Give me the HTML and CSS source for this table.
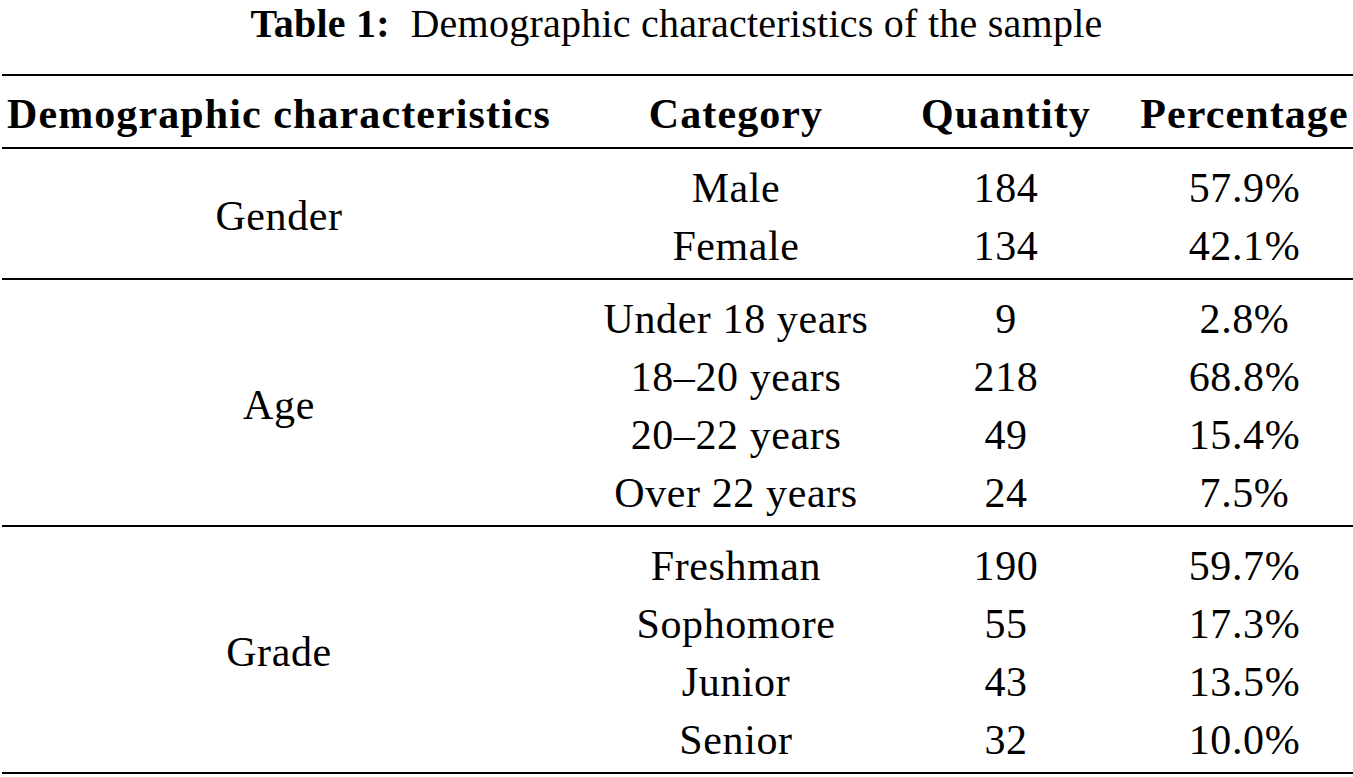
FILE: index.html
```html
<!DOCTYPE html>
<html lang="en">
<head>
<meta charset="utf-8">
<title>Table 1: Demographic characteristics of the sample</title>
<link rel="stylesheet" href="styles.css">
</head>
<body>
<div class="page">
  <h1 class="caption"><b class="caption-label">Table 1:</b>&nbsp; Demographic characteristics of the sample</h1>
  <div class="table">
    <div class="head">
      <div class="cell">Demographic characteristics</div>
      <div class="cell">Category</div>
      <div class="cell">Quantity</div>
      <div class="cell pct">Percentage</div>
    </div>

    <div class="group">
      <div class="group-label">Gender</div>
      <div class="group-rows">
        <div class="row"><span class="cell">Male</span><span class="cell">184</span><span class="cell pct">57.9%</span></div>
        <div class="row"><span class="cell">Female</span><span class="cell">134</span><span class="cell pct">42.1%</span></div>
      </div>
    </div>

    <div class="group">
      <div class="group-label">Age</div>
      <div class="group-rows">
        <div class="row"><span class="cell">Under 18 years</span><span class="cell">9</span><span class="cell pct">2.8%</span></div>
        <div class="row"><span class="cell">18–20 years</span><span class="cell">218</span><span class="cell pct">68.8%</span></div>
        <div class="row"><span class="cell">20–22 years</span><span class="cell">49</span><span class="cell pct">15.4%</span></div>
        <div class="row"><span class="cell">Over 22 years</span><span class="cell">24</span><span class="cell pct">7.5%</span></div>
      </div>
    </div>

    <div class="group">
      <div class="group-label">Grade</div>
      <div class="group-rows">
        <div class="row"><span class="cell">Freshman</span><span class="cell">190</span><span class="cell pct">59.7%</span></div>
        <div class="row"><span class="cell">Sophomore</span><span class="cell">55</span><span class="cell pct">17.3%</span></div>
        <div class="row"><span class="cell">Junior</span><span class="cell">43</span><span class="cell pct">13.5%</span></div>
        <div class="row"><span class="cell">Senior</span><span class="cell">32</span><span class="cell pct">10.0%</span></div>
      </div>
    </div>
  </div>
</div>
</body>
</html>
```

FILE: styles.css
```css
html, body {
  margin: 0;
  padding: 0;
  background: #ffffff;
}

body {
  font-family: "Liberation Serif", "Times New Roman", serif;
  color: #000000;
  width: 1353px;
  overflow: hidden;
}

.page {
  padding-left: 2px;
}

.caption {
  margin: 0 0 27px -2px;
  font-size: 40px;
  line-height: normal;
  font-weight: normal;
  letter-spacing: 0.25px;
  text-align: center;
  white-space: nowrap;
}

.caption-label {
  font-weight: bold;
}

.table {
  border-top: 2px solid #000;
  font-size: 42px;
  line-height: 58px;
  letter-spacing: 0.6px;
}

.head {
  display: grid;
  grid-template-columns: 554px 360px 180px 1fr;
  padding: 9px 0 4px;
  border-bottom: 2px solid #000;
  font-weight: bold;
  letter-spacing: 1.1px;
  white-space: nowrap;
}

.cell {
  text-align: center;
  white-space: nowrap;
}

.pct {
  padding-left: 40px;
}

.group {
  display: flex;
  padding: 10px 0 3px;
  border-bottom: 2px solid #000;
}

.group-label {
  flex: 0 0 554px;
  display: flex;
  align-items: center;
  justify-content: center;
  padding-bottom: 3px;
}

.group-rows {
  flex: 1 1 auto;
}

.row {
  display: grid;
  grid-template-columns: 360px 180px 1fr;
}
```
